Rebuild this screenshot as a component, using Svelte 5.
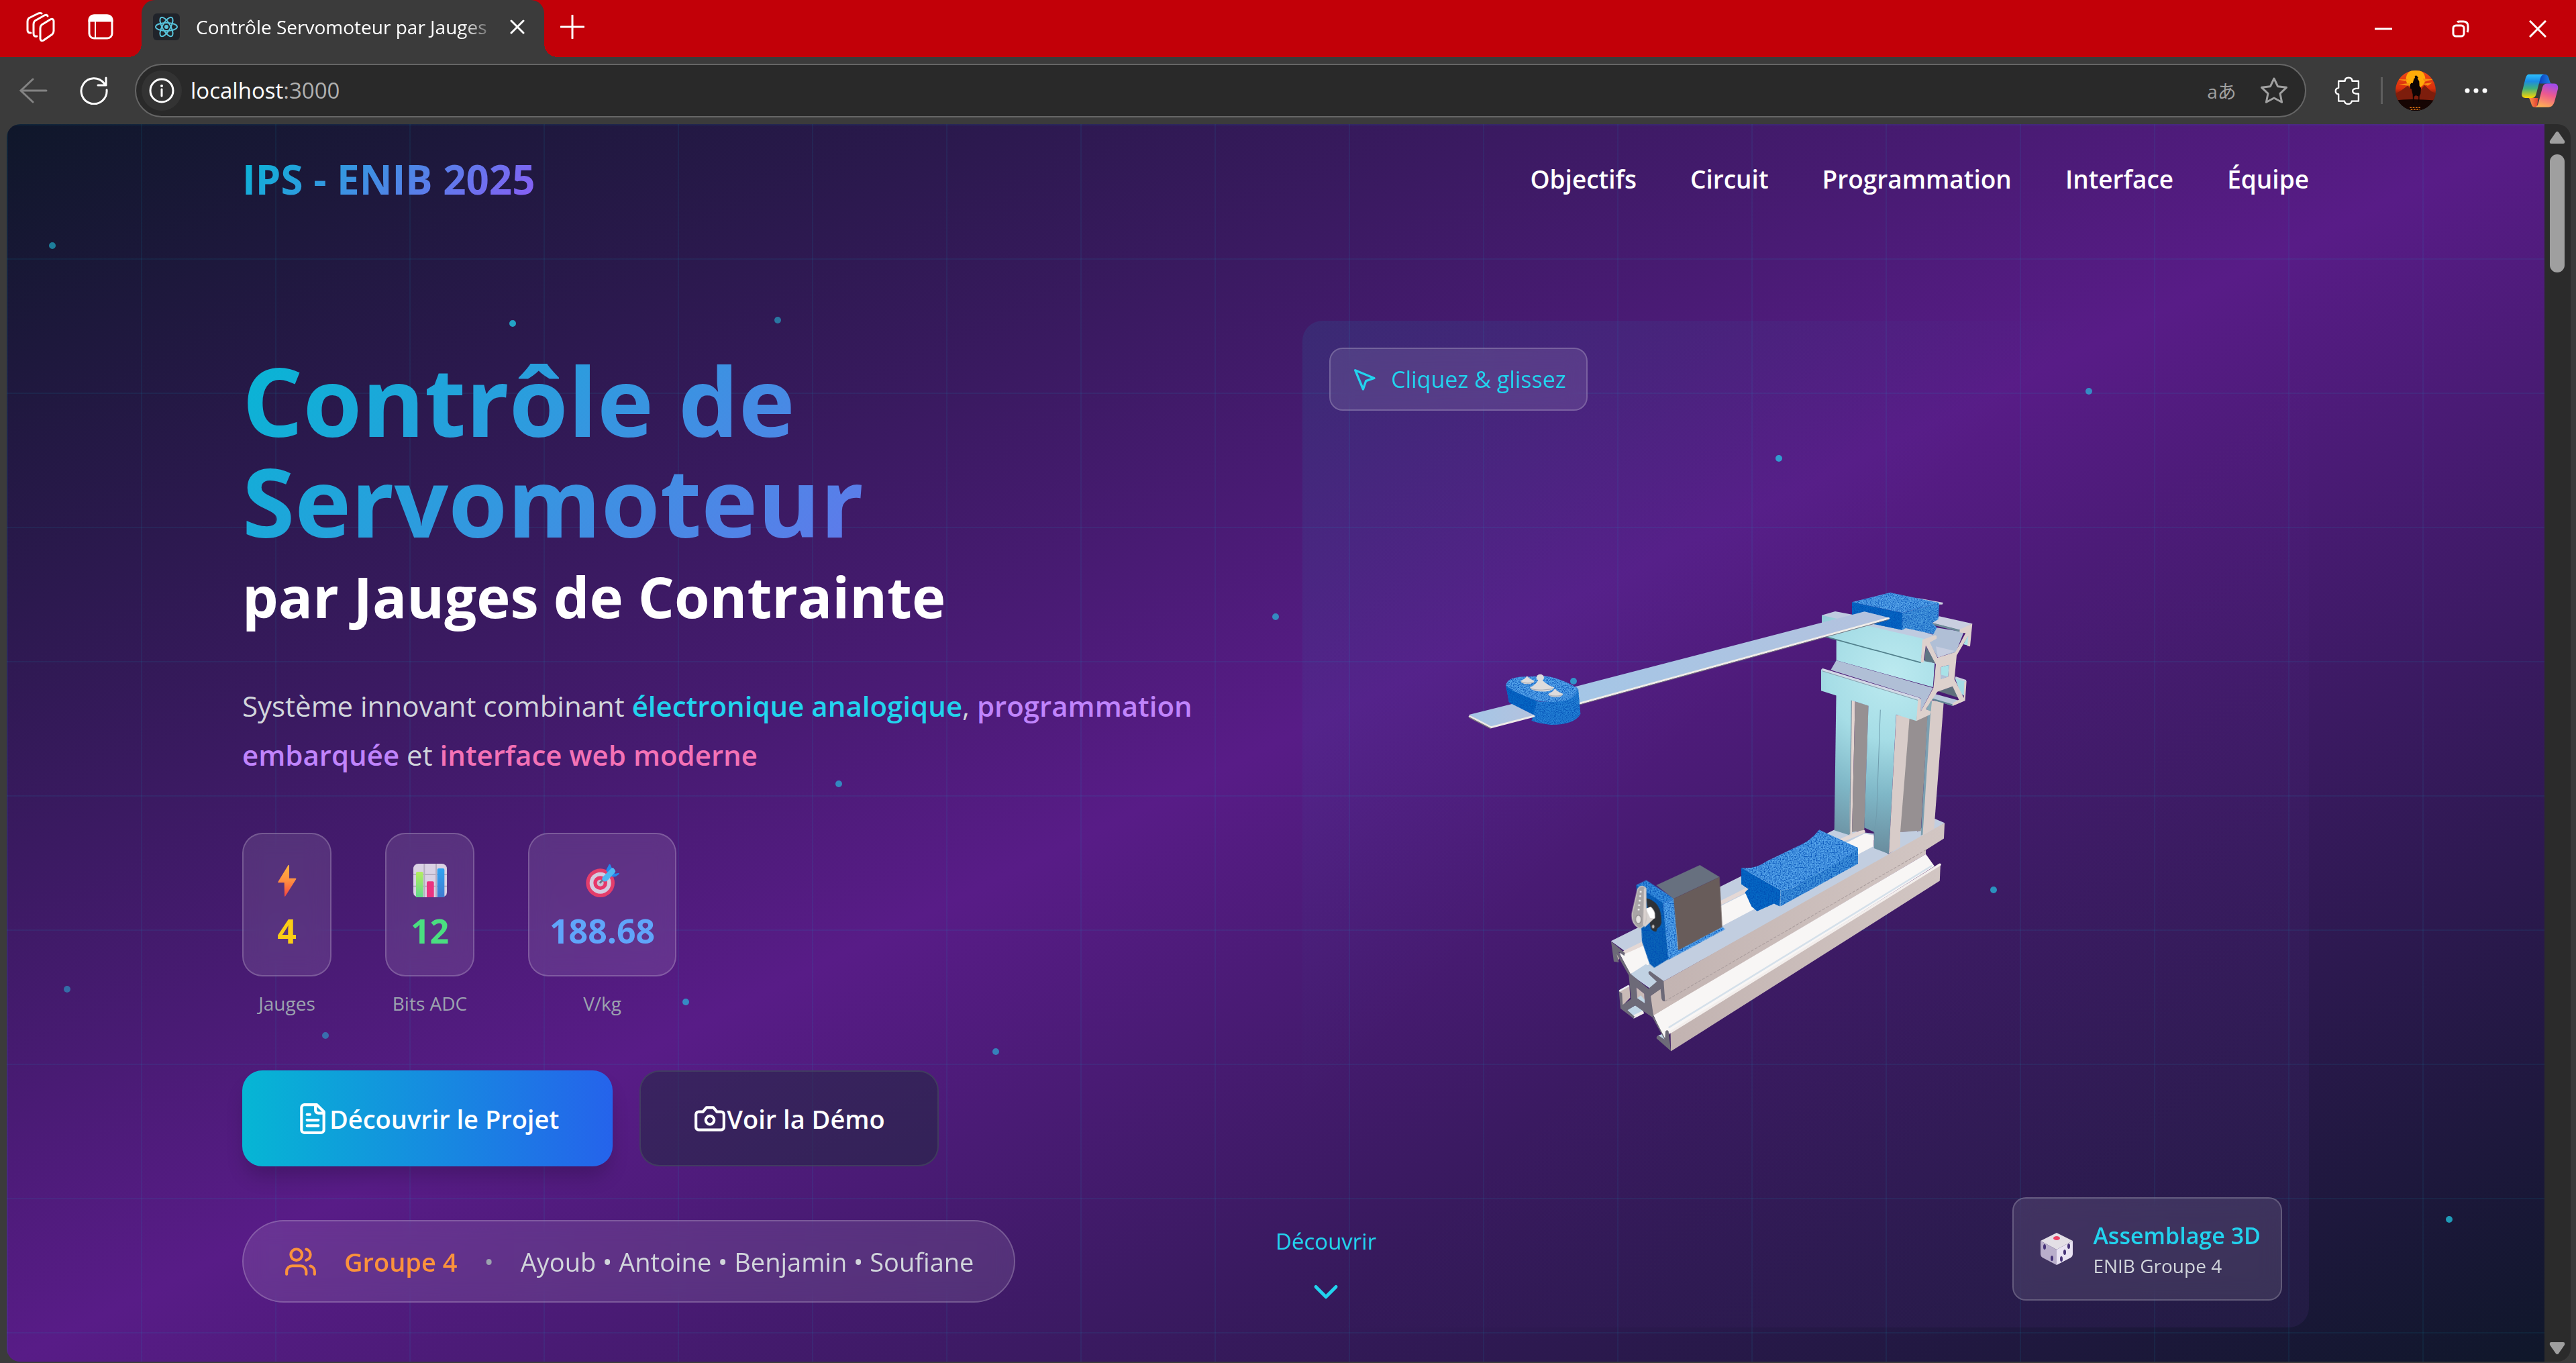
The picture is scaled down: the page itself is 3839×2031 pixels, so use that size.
<script>
  const navLinks = ['Objectifs', 'Circuit', 'Programmation', 'Interface', 'Équipe'];

  const stats = [
    { icon: 'bolt', value: '4', label: 'Jauges', tone: 'yellow' },
    { icon: 'chart', value: '12', label: 'Bits ADC', tone: 'green' },
    { icon: 'target', value: '188.68', label: 'V/kg', tone: 'blue' }
  ];

  // Floating particles: centre inside the hero and opacity.
  const particles = [
    [68, 181, 0.55], [754, 297, 0.75], [1149, 292, 0.5], [3103, 398, 0.6],
    [2641, 498, 0.7], [1891, 734, 0.6], [2335, 830, 0.65], [1240, 983, 0.6],
    [2961, 1141, 0.65], [1012, 1308, 0.6], [1474, 1382, 0.55], [475, 1358, 0.45],
    [90, 1289, 0.45], [3640, 1632, 0.7]
  ];
</script>

<div class="browser">
  <header class="tabbar">
    <button class="chrome-btn first" aria-label="Espaces de travail">
      <svg width="44" height="44" viewBox="0 0 44 44" fill="none" stroke="#fff" stroke-width="3" stroke-linejoin="round" stroke-linecap="round">
        <path d="M22 24q0-3 2-5L37 11q4-2 5 2v15q0 3-2 5L27 42q-4 2-5-2z" />
        <path d="M17 36q-5 1-5-4V18q0-3 2-5L28 5q4-2 5 1" />
        <path d="M8 31q-5 0-5-4V14q0-3 2-5L19 2q3-1 5 0" />
      </svg>
    </button>
    <button class="chrome-btn" aria-label="Onglets verticaux">
      <svg width="38" height="38" viewBox="0 0 38 38" fill="none" stroke="#fff" stroke-width="3">
        <rect x="2" y="2" width="34" height="34" rx="7" />
        <path d="M2 10q0-8 8-8h18q8 0 8 8z" fill="#fff" />
        <path d="M11 10v26" stroke-width="2" />
      </svg>
    </button>
    <div class="tab">
      <svg class="favicon" width="40" height="40" viewBox="0 0 40 40" fill="none" stroke="#58c4dc" stroke-width="2">
        <rect width="40" height="40" rx="6" fill="#20232a" stroke="none" />
        <circle cx="20" cy="20" r="3" fill="#58c4dc" stroke="none" />
        <ellipse cx="20" cy="20" rx="16" ry="6" />
        <ellipse cx="20" cy="20" rx="16" ry="6" transform="rotate(60 20 20)" />
        <ellipse cx="20" cy="20" rx="16" ry="6" transform="rotate(120 20 20)" />
      </svg>
      <span class="tab-title">Contrôle Servomoteur par Jauges</span>
      <button class="tab-close" aria-label="Fermer l'onglet">
        <svg width="22" height="22" viewBox="0 0 22 22" stroke="#fff" stroke-width="3" stroke-linecap="round"><path d="m2 2 18 18M20 2 2 20" /></svg>
      </button>
    </div>
    <button class="chrome-btn new-tab" aria-label="Nouvel onglet">
      <svg width="36" height="36" viewBox="0 0 36 36" stroke="#fff" stroke-width="3" stroke-linecap="round"><path d="M18 1v34M1 18h34" /></svg>
    </button>
    <div class="window-controls">
      <button aria-label="Réduire"><svg width="26" height="26" viewBox="0 0 26 26" stroke="#fff" stroke-width="3"><path d="M0 13h26" /></svg></button>
      <button aria-label="Restaurer">
        <svg width="26" height="26" viewBox="0 0 26 26" fill="none" stroke="#fff" stroke-width="3"><rect x="2" y="8" width="16" height="16" rx="4" /><path d="M8 3q1-1 4-1h5q7 0 7 7v5q0 2-1 4" /></svg>
      </button>
      <button aria-label="Fermer"><svg width="26" height="26" viewBox="0 0 26 26" stroke="#fff" stroke-width="3"><path d="m1 1 24 24M25 1 1 25" /></svg></button>
    </div>
  </header>

  <div class="toolbar">
    <button class="tool-btn" aria-label="Retour">
      <svg width="42" height="38" viewBox="0 0 42 38" fill="none" stroke="#838383" stroke-width="3" stroke-linecap="round"><path d="M20 2 2 19l18 17M2 19h38" /></svg>
    </button>
    <button class="tool-btn" aria-label="Actualiser">
      <svg width="42" height="42" viewBox="0 0 42 42" fill="none" stroke="#fff" stroke-width="3" stroke-linecap="round" stroke-linejoin="round"><path d="M40 20a19 19 0 1 1-4-10l3 3M39 2v11H27" /></svg>
    </button>
    <div class="omnibox">
      <button class="info" aria-label="Informations sur le site">
        <svg width="38" height="38" viewBox="0 0 38 38" fill="none" stroke="#fff" stroke-width="3"><circle cx="19" cy="19" r="17" /><path d="M19 17v10" stroke-linecap="round" /><circle cx="19" cy="12" r="2" fill="#fff" stroke="none" /></svg>
      </button>
      <a class="url" href="http://localhost:3000">localhost<span>:3000</span></a>
      <button class="translate" aria-label="Traduire">aあ</button>
      <button class="star" aria-label="Ajouter aux favoris">
        <svg width="42" height="42" viewBox="0 0 42 42" fill="none" stroke="#a0a0a0" stroke-width="3" stroke-linejoin="round"><path d="m21 3 5.500 11.700 13 1.600-9.500 9 2.600 13L21 32l-11.600 6.300 2.600-13-9.500-9 13-1.600z" /></svg>
      </button>
    </div>
    <button class="tool-btn ext" aria-label="Extensions">
      <svg width="40" height="42" viewBox="120 42 112 124" fill="none" stroke="#fff" stroke-width="7" stroke-linejoin="round"><path d="M138 62h28q0-15 16-15t16 15h28v32q-26 0-26 12t26 12v32h-30q-2 13-16 13t-16-13h-26v-30q-13-2-13-14t13-14z" /></svg>
    </button>
    <span class="separator"></span>
    <button class="avatar" aria-label="Profil">
      <svg width="60" height="60" viewBox="0 0 180 180">
        <defs>
          <linearGradient id="sky" x2="0" y2="1"><stop offset="0" stop-color="#f04a16" /><stop offset=".45" stop-color="#d82f0c" /><stop offset=".6" stop-color="#7a1a08" /><stop offset=".8" stop-color="#120402" /></linearGradient>
          <clipPath id="round"><circle cx="90" cy="90" r="90" /></clipPath>
        </defs>
        <g clip-path="url(#round)">
          <rect width="180" height="180" fill="url(#sky)" />
          <circle cx="90" cy="38" r="43" fill="#ffab08" />
          <path d="M10 40h45l-12 8zM122 36l48 4-40 10zM15 62l50-6-10 12zM120 60l45-6-20 14z" fill="#f98c12" />
          <path d="m0 104 28-16 26-20 24 24 28 2 24-28 30 28 20 8v34H0z" fill="#7d1d0c" />
          <path d="M0 134q60-10 180 0v46H0z" fill="#160503" />
          <path d="M86 26q6-7 11 0l5 6-4 3 8 14 1 20 7 10-2 25-5 10-1 30h-4l1-28-12-5-8 6-1 26h-4l-1-36-6-24-5-2-2-16 6-9 7 0 6-20 4-2z" fill="#0c0403" />
          <path d="M64 166h50M68 174h42" stroke="#ef7b12" stroke-width="4" stroke-dasharray="8 5" />
        </g>
      </svg>
    </button>
    <button class="tool-btn more" aria-label="Paramètres et plus">
      <svg width="34" height="8" viewBox="0 0 34 8" fill="#fff"><circle cx="4" cy="4" r="3.500" /><circle cx="17" cy="4" r="3.500" /><circle cx="30" cy="4" r="3.500" /></svg>
    </button>
    <button class="tool-btn copilot" aria-label="Copilot">
      <svg width="56" height="50" viewBox="950 28 170 153">
        <defs>
          <linearGradient id="cpA" x2="0" y2="1"><stop offset="0" stop-color="#2cc0ff" /><stop offset=".3" stop-color="#1b8be4" /><stop offset=".6" stop-color="#3fb07c" /><stop offset="1" stop-color="#ffd400" /></linearGradient>
          <linearGradient id="cpB" x1=".6" x2=".3" y2="1"><stop offset="0" stop-color="#a24be8" /><stop offset=".45" stop-color="#ee5a8c" /><stop offset="1" stop-color="#ffb152" /></linearGradient>
          <linearGradient id="cpC" x2="1"><stop offset="0" stop-color="#0a3fc0" /><stop offset="1" stop-color="#1f8bea" /></linearGradient>
          <linearGradient id="cpD" x2="1"><stop offset="0" stop-color="#ff9a4a" /><stop offset="1" stop-color="#e03b33" /></linearGradient>
        </defs>
        <path d="M1036 30h20q16 0 20 16l6 20q2 6 10 6h-60z" fill="url(#cpC)" />
        <path d="M984 138h44l-6 42h-10q-12 0-16-16l-6-18q-2-7-6-8z" fill="url(#cpD)" />
        <path d="M984 30h72q-14 2-18 18l-20 74q-4 16-20 16h-28q-20 0-17-22l16-64q6-22 15-22z" fill="url(#cpA)" />
        <path d="M1070 72h30q20 0 18 24l-16 60q-8 24-26 24h-64q12-2 16-16l20-76q4-16 22-16z" fill="url(#cpB)" />
      </svg>
    </button>
  </div>

  <div class="viewport">
    <div class="hero">
      {#each particles as [x, y, o]}
        <span class="particle" style="left:{x}px;top:{y}px;opacity:{o}"></span>
      {/each}

      <nav class="nav">
        <a class="logo" href="#accueil">IPS - ENIB 2025</a>
        <div class="links">
          {#each navLinks as link}<a href="#{link.toLowerCase()}">{link}</a>{/each}
        </div>
      </nav>

      <main class="content">
        <section class="intro">
          <h1><span class="title">Contrôle de Servomoteur</span><span class="subtitle">par Jauges de Contrainte</span></h1>
          <p>
            Système innovant combinant <b class="cyan">électronique analogique</b>,
            <b class="purple">programmation embarquée</b> et <b class="pink">interface web moderne</b>
          </p>

          <div class="stats">
            {#each stats as stat}
              <div class="stat">
                <div class="stat-card">
                  <div class="emoji">
                    {#if stat.icon === 'bolt'}
                      <svg width="50" height="50" viewBox="0 0 150 150">
                        <defs><linearGradient id="bolt" x2="0" y2="1"><stop offset="0" stop-color="#ffb640" /><stop offset=".5" stop-color="#ff8f40" /><stop offset="1" stop-color="#f5453f" /></linearGradient></defs>
                        <path d="M80 6q4-2 4 3v56h27q6 0 4 4l-48 76q-4 4-4-2l-1-58H36q-4 0-2-4z" fill="url(#bolt)" />
                      </svg>
                    {:else if stat.icon === 'chart'}
                      <svg width="50" height="50" viewBox="0 0 150 150">
                        <defs>
                          <linearGradient id="barG" x2="0" y2="1"><stop offset="0" stop-color="#b4ee60" /><stop offset="1" stop-color="#62d98e" /></linearGradient>
                          <linearGradient id="barB" x2="0" y2="1"><stop offset="0" stop-color="#2fa4f3" /><stop offset="1" stop-color="#417bd0" /></linearGradient>
                        </defs>
                        <rect width="150" height="150" rx="22" fill="#dad2e4" />
                        <path d="M49 0v150M102 0v150M0 48h150M0 101h150" stroke="#b7afc2" stroke-width="6" />
                        <path d="M12 150V42q0-6 6-6h20q6 0 6 6v108z" fill="url(#barG)" />
                        <path d="M60 150V85q0-6 6-6h20q6 0 6 6v65z" fill="#ea3480" />
                        <path d="M107 150V27q0-6 6-6h20q6 0 6 6v123z" fill="url(#barB)" />
                      </svg>
                    {:else}
                      <svg width="50" height="50" viewBox="0 0 150 150">
                        <circle cx="65" cy="86" r="64" fill="#e33d6b" />
                        <circle cx="65" cy="86" r="48" fill="#d3cbe0" />
                        <circle cx="65" cy="86" r="31" fill="#e8376a" />
                        <circle cx="65" cy="86" r="15" fill="#c8c2d6" />
                        <path d="m65 84 14-14" stroke="#6f7186" stroke-width="9" stroke-linecap="round" />
                        <path d="m90 30 14-27q6-2 8 6l6 14 12 22 18-4q4 2-2 8-14 14-30 8z" fill="#2487ec" />
                        <path d="m75 60 42-42q9 0 12 8 6 8 2 12L98 74q-12 10-22 2-6-8-1-16z" fill="#4fb8f2" />
                      </svg>
                    {/if}
                  </div>
                  <strong class={stat.tone}>{stat.value}</strong>
                </div>
                <span class="stat-label">{stat.label}</span>
              </div>
            {/each}
          </div>

          <div class="actions">
            <button class="primary">
              <svg width="50" height="50" viewBox="0 0 24 24" fill="none" stroke="currentColor" stroke-width="2" stroke-linecap="round" stroke-linejoin="round">
                <path d="M15 2H6a2 2 0 0 0-2 2v16a2 2 0 0 0 2 2h12a2 2 0 0 0 2-2V7Z" /><path d="M14 2v4a2 2 0 0 0 2 2h4M10 9H8M16 13H8M16 17H8" />
              </svg>Découvrir le Projet
            </button>
            <button class="secondary">
              <svg width="50" height="50" viewBox="0 0 24 24" fill="none" stroke="currentColor" stroke-width="2" stroke-linecap="round" stroke-linejoin="round">
                <path d="M14.500 4h-5L7 7H4a2 2 0 0 0-2 2v9a2 2 0 0 0 2 2h16a2 2 0 0 0 2-2V9a2 2 0 0 0-2-2h-3z" /><circle cx="12" cy="13" r="3" />
              </svg>Voir la Démo
            </button>
          </div>

          <div class="team">
            <svg width="50" height="50" viewBox="0 0 24 24" fill="none" stroke="#fb923c" stroke-width="2" stroke-linecap="round" stroke-linejoin="round">
              <path d="M16 21v-2a4 4 0 0 0-4-4H6a4 4 0 0 0-4 4v2" /><circle cx="9" cy="7" r="4" /><path d="M22 21v-2a4 4 0 0 0-3-3.870M16 3.130a4 4 0 0 1 0 7.750" />
            </svg>
            <b>Groupe 4</b>
            <span class="dot">•</span>
            <span class="members">Ayoub • Antoine • Benjamin • Soufiane</span>
          </div>
        </section>

        <section class="model" aria-label="Modèle 3D">
          <svg class="scene" viewBox="0 0 1500 1500">
            <defs>
              <radialGradient id="glow" gradientUnits="userSpaceOnUse" cx="540" cy="440" r="820"><stop offset="0" stop-color="#bceaf0" /><stop offset=".35" stop-color="#a6dde6" /><stop offset=".65" stop-color="#7fb7c7" /><stop offset="1" stop-color="#67889a" /></radialGradient>
              <linearGradient id="arm" x1="1" x2="0"><stop offset="0" stop-color="#b4c2de" /><stop offset="1" stop-color="#a4c6e6" /></linearGradient>
              <linearGradient id="side" x1="0" x2="1"><stop offset="0" stop-color="#c2b3b1" /><stop offset="1" stop-color="#d2c6c3" /></linearGradient>
              <filter id="grain" x="0" y="0" width="1" height="1" color-interpolation-filters="sRGB">
                <feTurbulence type="fractalNoise" baseFrequency=".5" numOctaves="2" seed="4" />
                <feColorMatrix values="0 0 0 0 0  0 0 0 0 .3  0 0 0 0 .7  2.400 0 0 0 -.920" result="n" />
                <feComposite in="n" in2="SourceAlpha" operator="in" result="m" />
                <feMerge><feMergeNode in="SourceGraphic" /><feMergeNode in="m" /></feMerge>
              </filter>
            </defs>

            <!-- base rail -->
            <g transform="translate(209 362) scale(.5612 .4847)">
              <path d="M447 1160 1045 815 1145 830V850L485 1192z" fill="#c2cee0" />
              <path d="M485 1200 1120 830 1145 835V875L500 1260z" fill="#f8f6f5" />
              <path d="M485 1194 535 1166M740 1042 812 1000M1060 850 1116 823" stroke="#e4d8d5" stroke-width="12" stroke-linecap="round" />
              <path d="M500 1258 740 1115 1145 868 1185 893 1305 783 1333 797 1283 835 585 1285z" fill="#c2cee0" />
              <path d="M585 1285 1185 893 1333 797 1331 845 1283 880V893L560 1390 548 1330 590 1345z" fill="url(#side)" />
              <path d="M590 1345 1283 880" stroke="#a99c9c" stroke-width="2" stroke-dasharray="8 4" />
              <path d="M560 1388 1283 893 1306 930 605 1440 590 1468z" fill="#f8f6f5" />
              <path d="M600 1426 1300 928" stroke="#d5e0ea" stroke-width="5" />
              <path d="M605 1440 1322 922 1320 975 606 1499z" fill="url(#side)" />
              <path d="M605 1440 1320 925" stroke="#f3eeec" stroke-width="7" stroke-linecap="round" />
            </g>

            <!-- rail end profile -->
            <g transform="translate(449 802) scale(.33333)">
              <path d="M92 425 170 392 205 470 118 515 70 420z" fill="#f8f6f5" />
              <path d="m118 515 70-45 40 20 10 60-30 30z" fill="#c1d2e3" />
              <path d="M68 590 115 565 118 620 85 655z" fill="#c9bab7" /><path d="m70 590 43-24" stroke="#eceef2" stroke-width="8" />
              <path d="m105 675 38-22 36 28-45 32z" fill="#c1d6e6" /><path d="m133 706 45-22" stroke="#f1eeec" stroke-width="14" />
              <path d="m52 412 18 30-8 20z" fill="#c9bab7" />
              <path d="m210 612 50-38 10 64 70-10-118 72z" fill="#c9bab7" />
              <path d="m242 790 20-8 14 32z" fill="#c1d6e6" />
              <path d="M33 368 95 420 92 433 66 415 120 513 200 580 237 548 202 515Q196 500 208 502L268 545 274 635Q262 640 258 622L254 582 210 612 222 700 274 802 276 770Q284 762 290 770L300 858 236 802Q236 788 246 790L272 806 218 708 140 655 106 676 138 704 134 713 75 668 68 592 82 600 85 652 122 626 112 520 58 425 68 462 45 458zM146 574 150 618 184 644 181 602z" fill="#6d6a78" fill-rule="evenodd" />
              <path d="M146 574 181 602 184 644 150 622z" fill="#c9bab7" /><path d="m150 622 16-12 17 20v14z" fill="#c1d6e6" />
            </g>

            <!-- column -->
            <g transform="translate(699 382) scale(.33333)">
              <path d="M290 500 360 545 352 1154 281 1132z" fill="url(#glow)" />
              <path d="M357 548 374 556 360 1154 348 1154z" fill="#e2d4d0" /><path d="M358 550 350 1150" stroke="#7e97a4" stroke-width="4" />
              <path d="M374 556 434 574 415 1130 360 1140z" fill="#969092" />
              <path d="M434 565 558 605 525 1237 458 1212 460 1140 415 1120z" fill="url(#glow)" />
              <path d="m487 592-17 470-12 90" fill="none" stroke="#6f9cad" stroke-width="3" />
              <path d="M558 616 620 625 576 1205 525 1237z" fill="#d8ccc9" />
              <path d="M617 630 700 600 668 1135 576 1140z" fill="#969092" />
              <path d="M576 1140 650 1134 668 1154 576 1205z" fill="#c2cee0" />
              <path d="M700 570 718 555 682 1150 668 1154z" fill="#7c9fb0" />
              <path d="M715 550 770 560 727 1125 676 1154z" fill="#d8ccc9" />
            </g>

            <!-- blue support -->
            <g filter="url(#grain)">
              <g transform="translate(209 362) scale(.5612 .4847)">
                <path d="M793 935 897 1003 895 1053 880 1045 835 1068 820 1053 803 1010 812 1000 793 985z" fill="#0668c4" />
                <path d="M793 935Q830 940 860 915L940 870Q975 855 1000 818L1103 873V877Q1060 920 1000 950 960 975 940 990 920 1005 897 1003z" fill="#57a6ec" />
                <path d="M897 1003Q920 1005 940 990 960 972 1000 950 1070 910 1103 875V922L897 1053z" fill="#4294dc" />
              </g>
              <!-- servo bracket -->
              <g transform="translate(449 802) scale(.33333)">
                <path d="M145 117 265 195 290 447 226 486 205 468 182 400 172 372 168 300z" fill="#0a64b8" />
                <path d="M145 117 190 95 315 177 265 197z" fill="#3a92e0" />
                <path d="M265 197 315 177 332 405 530 304 543 313 290 450z" fill="#58a8ee" />
              </g>
            </g>
            <g transform="translate(449 802) scale(.33333)">
              <path d="M235 117 430 27 518 80 312 178z" fill="#67707f" />
              <path d="M312 178 518 80 530 304 333 408z" fill="#685c5a" />
              <path d="M190 175Q260 190 258 285 256 300 240 310L235 325Q212 325 208 300z" fill="#2f3236" />
              <ellipse cx="221" cy="302" rx="6" ry="9" fill="#d0cac8" stroke="#555" stroke-width="3" />
              <path d="m180 230 30-16q20 10 20 48l-48 45z" fill="#d7d2d0" /><path d="m188 222 22-8 18 26v26l-20-2z" fill="#fff" />
              <path d="M152 135Q166 112 188 130L190 265Q184 308 158 308 124 290 127 245z" fill="#a9a5a6" stroke="#c6c0be" stroke-width="5" />
              <path d="m188 130 2 130-8 42-6-10 4-160z" fill="#d9d1ce" />
              <ellipse cx="155" cy="270" rx="13" ry="19" fill="#e5e2e1" stroke="#8c8889" stroke-width="4" />
              <path d="M165 146h0M163 166h0M161 186h0M158 206h0M156 226h0" stroke="#eee" stroke-width="9" stroke-linecap="round" />
            </g>

            <!-- top beam -->
            <g transform="translate(699 382) scale(.33333)">
              <path d="M648 92 768 114 764 122 740 122z" fill="#c9cede" />
              <path d="M225 170 285 153 560 205 735 262 680 282 240 190z" fill="#bfcbe0" />
              <path d="M290 265 730 385 722 492 290 372z" fill="url(#glow)" />
              <path d="M225 170 680 275 668 380 240 265 225 205z" fill="url(#glow)" />
              <path d="M240 266 668 382" stroke="#52808c" stroke-width="5" />
              <path d="M290 372 722 495 668 600 665 540 265 415z" fill="#b0bfd6" />
              <path d="M222 412 660 545 648 643 222 508z" fill="url(#glow)" />
              <path d="M226 412 662 545" stroke="#d2d8e6" stroke-width="10" /><path d="M226 419 660 552" stroke="#8b9dac" stroke-width="3" />
              <path d="M690 310 735 385 684 376z" fill="#5f7683" />
              <path d="M735 225 860 245 825 335 742 358 705 292z" fill="#b0bfd6" />
              <path d="M735 310 820 330 745 360z" fill="#c6cde0" />
              <path d="M750 175 898 208 845 238 718 205z" fill="#c9cfe0" /><path d="M718 208 842 240" stroke="#6e8b98" stroke-width="9" />
              <path d="M882 255 880 306 858 300z" fill="#a6e0e6" />
              <path d="M820 450 870 466 862 530 845 520z" fill="#a6dce4" /><path d="M822 448 870 464" stroke="#c7d0de" stroke-width="9" />
              <path d="M745 510 810 488 840 540z" fill="#5f6f7c" />
              <path d="M722 520 840 552 810 575 718 545z" fill="#b8c8da" /><path d="M718 545 810 572" stroke="#5f8392" stroke-width="7" />
              <path d="m690 590 28-40-6 50z" fill="#86acb8" />
              <path d="M675 280 728 260Q742 258 738 275L708 292 742 360 822 335 868 250 845 248Q836 240 846 232L898 208 888 310 876 308 880 262 828 350 818 456 860 540 862 470 872 464 866 552 812 575Q804 568 815 560L838 548 810 488 742 512 690 590 712 600 708 615 648 643 655 545 668 545 668 600 724 495 735 390 690 305 680 382 668 380zM758 402 756 455 790 445 794 392z" fill="#ddd1cd" fill-rule="evenodd" />
              <path d="M758 402 794 392 790 445 756 455z" fill="#a9e2e8" /><path d="m756 436 34 9-34 12z" fill="#b0bfd6" />
            </g>
            <g filter="url(#grain)" transform="translate(699 382) scale(.33333)">
              <path d="M360 112 530 69 750 115 585 160z" fill="#5aa8ec" />
              <path d="M360 112 585 160 584 236 360 190z" fill="#0668c4" />
              <path d="M585 160 750 115 746 188 718 205 740 225 724 255 600 228 584 236z" fill="#4a9be0" />
            </g>

            <!-- arm and load -->
            <g transform="translate(209 362) scale(.5612 .4847)">
              <path d="M345 380 1120 147 1186 166 362 430z" fill="url(#arm)" />
              <path d="M362 430 1184 168" stroke="#f1ede9" stroke-width="6" stroke-linecap="round" /><path d="M362 434 1184 172" stroke="#777680" stroke-width="2" />
            </g>
            <g filter="url(#grain)" transform="translate(209 362) scale(.5612 .4847)">
              <path d="M168 375Q210 425 275 425 335 420 360 385L366 462Q350 495 288 495 255 492 236 482L245 467 183 431 176 425z" fill="#2582d6" />
              <path d="M168 372 250 422 236 482 245 467 183 431 176 425z" fill="#0668c4" />
              <path d="M168 375Q170 345 230 347L270 345Q310 350 358 382 358 425 285 425 250 425 230 412 180 390 168 375z" fill="#57a6ec" />
            </g>
            <g transform="translate(209 362) scale(.5612 .4847)">
              <path d="M70 464 184 431 245 467 128 503z" fill="url(#arm)" />
              <path d="M70 468 128 503 244 468" fill="none" stroke="#eeeae7" stroke-width="6" stroke-linejoin="round" /><path d="m70 472 58 35" stroke="#7d7a80" stroke-width="3" />
              <g fill="#dedcdc">
                <path d="M232 380Q255 368 258 342 264 368 296 380 292 393 264 393 236 392 232 380z" /><circle cx="259" cy="350" r="10" />
                <path d="M207 360Q220 354 224 345 230 354 244 360 240 370 225 370 210 370 207 360z" />
                <path d="M280 400Q294 394 298 384 304 394 320 400 316 410 300 410 284 410 280 400z" />
              </g>
              <path d="M233 383Q250 393 294 384M208 363Q225 371 242 364M281 403Q300 411 318 403" fill="none" stroke="#aeb2ba" stroke-width="3" />
            </g>
          </svg>

          <div class="hint">
            <svg width="40" height="40" viewBox="0 0 24 24" fill="none" stroke="currentColor" stroke-width="2" stroke-linecap="round" stroke-linejoin="round"><path d="m4 4 7.070 17 2.510-7.390L21 11.070z" /></svg>
            Cliquez &amp; glissez
          </div>

          <div class="caption">
            <svg width="68" height="50" viewBox="0 0 68 50">
              <path d="m34 1 24 12-24 13L10 13z" fill="#e3dfe6" /><path d="m10 13 24 13v23L13 38q-3-2-3-5z" fill="#b9aecb" /><path d="m58 13-24 13v23l21-11q3-2 3-5z" fill="#e9e3f3" />
              <ellipse cx="34" cy="9" rx="5" ry="3" fill="#ee4266" />
              <g fill="#463378"><ellipse cx="16" cy="22" rx="2" ry="4" /><ellipse cx="27" cy="39" rx="2" ry="4" /><ellipse cx="52" cy="21" rx="2" ry="4" /><ellipse cx="46" cy="30" rx="2" ry="4" /><ellipse cx="41" cy="40" rx="2" ry="4" /></g>
            </svg>
            <div><strong>Assemblage 3D</strong><span>ENIB Groupe 4</span></div>
          </div>
        </section>
      </main>

      <a class="discover" href="#objectifs">
        Découvrir
        <svg width="60" height="60" viewBox="0 0 24 24" fill="none" stroke="currentColor" stroke-width="2" stroke-linecap="round" stroke-linejoin="round"><path d="m6 9 6 6 6-6" /></svg>
      </a>
    </div>

    <div class="scrollbar" aria-hidden="true">
      <svg width="24" height="18" viewBox="0 0 24 18" fill="#9f9f9f"><path d="M10 1q2-2 4 0l9 13q1 4-2 4H3q-3 0-2-4z" /></svg>
      <span class="thumb"></span>
      <svg width="24" height="18" viewBox="0 0 24 18" fill="#9f9f9f"><path d="M10 17q2 2 4 0l9-13q1-4-2-4H3Q0 0 1 4z" /></svg>
    </div>
  </div>
</div>

<style>
  :global(body) { background: #3b3b3b; }
  .browser { display: flex; flex-direction: column; min-height: 100vh; box-sizing: border-box; background: #3b3b3b; font-family: "Open Sans", "Noto Sans", sans-serif; color: #fff; padding-bottom: 2px; }
  button { font: inherit; color: inherit; background: none; border: 0; padding: 0; cursor: pointer; display: flex; align-items: center; justify-content: center; }
  a { color: inherit; text-decoration: none; }
  svg { display: block; flex: none; }

  .tabbar { display: flex; height: 85px; background: #c20008; }
  .chrome-btn { width: 90px; height: 80px; }
  .chrome-btn.first { margin-left: 15px; }
  .tab { position: relative; display: flex; align-items: center; width: 600px; margin-left: 16px; box-sizing: border-box; padding: 0 20px 5px 17px; background: #3b3b3b; border-radius: 20px 20px 0 0; }
  .tab::before, .tab::after { content: ""; position: absolute; bottom: 0; width: 20px; height: 20px; }
  .tab::before { left: -20px; background: radial-gradient(circle at 0 0, transparent 20px, #3b3b3b 20px); }
  .tab::after { right: -20px; background: radial-gradient(circle at 100% 0, transparent 20px, #3b3b3b 20px); }
  .tab-title { flex: 1; margin-left: 24px; font-size: 28px; line-height: 40px; white-space: nowrap; mask-image: linear-gradient(90deg, #000 396px, transparent 450px); }
  .tab-close { width: 40px; height: 40px; margin-left: 12px; }
  .new-tab { width: 84px; }
  .window-controls { display: flex; margin-left: auto; }
  .window-controls button { width: 115px; height: 85px; }

  .toolbar { display: flex; align-items: center; height: 100px; padding: 0 14px 0 5px; }
  .tool-btn { width: 90px; height: 80px; }
  .omnibox { flex: 1; display: flex; align-items: center; height: 80px; box-sizing: border-box; margin-left: 16px; padding: 0 16px 0 8px; border: 2px solid #666; border-radius: 40px; background: #292929; }
  .info { width: 60px; height: 60px; border-radius: 50%; background: #333; }
  .url { flex: 1; margin-left: 13px; font-size: 33px; line-height: 44px; }
  .url span { color: #b0b0b0; }
  .translate { width: 80px; font-family: "Open Sans", "Noto Sans CJK JP", sans-serif; font-size: 28px; color: #a0a0a0; }
  .star { width: 60px; margin-left: 8px; }
  .ext { width: 80px; margin-left: 21px; }
  .separator { width: 3px; height: 40px; margin-left: 10px; background: #5e5e5e; }
  .avatar { margin-left: 19px; }
  .more { width: 80px; margin-left: 20px; }
  .copilot { width: 80px; margin-left: 15px; }

  .viewport { flex: 1; display: flex; margin: 0 8px 0 10px; border-radius: 20px; overflow: hidden; }
  .hero {
    position: relative; flex: 1; padding: 0 60px;
    background:
      linear-gradient(rgba(6, 182, 212, 0.08) 2px, transparent 2px) 0 0 / 200px 200px,
      linear-gradient(90deg, rgba(6, 182, 212, 0.08) 2px, transparent 2px) 0 0 / 200px 200px,
      linear-gradient(to bottom right, #0f172a, #581c87, #0f172a);
  }
  .scrollbar { display: flex; flex-direction: column; align-items: center; width: 39px; box-sizing: border-box; padding: 11px 2px 11px 0; background: #2b2b2b; }
  .thumb { width: 22px; height: 176px; margin: 16px 0 auto; border-radius: 11px; background: #9f9f9f; }
  .particle { position: absolute; width: 10px; height: 10px; margin: -5px 0 0 -5px; border-radius: 50%; background: #22d3ee; z-index: 1; }

  .nav { display: flex; align-items: center; justify-content: space-between; max-width: 3080px; height: 164px; margin: 0 auto; }
  .logo { font-size: 60px; line-height: 80px; font-weight: 700; background: linear-gradient(135deg, #06b6d4, #8b5cf6); background-clip: text; color: transparent; }
  .links { display: flex; gap: 80px; font-size: 37px; line-height: 56px; font-weight: 600; }

  .content { display: grid; grid-template-columns: 1fr 1fr; gap: 80px; align-items: center; max-width: 3080px; margin: 0 auto; padding: 129px 0 51px; }
  .intro { padding-top: 6px; }
  h1 { margin: 0; font-weight: 700; }
  .title, .subtitle { display: block; }
  .title { font-size: 142px; line-height: 150px; background: linear-gradient(135deg, #06b6d4, #8b5cf6); background-clip: text; color: transparent; }
  .subtitle { font-size: 85px; line-height: 134px; }
  p { margin: 60px 0 0; font-size: 42px; line-height: 73px; color: #d1d5db; }
  p b { font-weight: 600; }
  .cyan { color: #22d3ee; }
  .purple { color: #c084fc; }
  .pink { color: #f472b6; }

  .stats { display: flex; gap: 80px; margin-top: 80px; }
  .stat { display: flex; flex-direction: column; align-items: center; }
  .stat-card { display: flex; flex-direction: column; align-items: center; min-width: 133px; box-sizing: border-box; padding: 30px; border: 2px solid rgba(255, 255, 255, 0.2); border-radius: 30px; background: rgba(255, 255, 255, 0.1); backdrop-filter: blur(16px); }
  .emoji { display: flex; align-items: center; height: 78px; }
  .stat-card strong { font-size: 50px; line-height: 72px; }
  .yellow { color: #facc15; }
  .green { color: #4ade80; }
  .blue { color: #60a5fa; }
  .stat-label { margin-top: 20px; font-size: 28px; line-height: 40px; color: #9ca3af; }

  .actions { display: flex; gap: 40px; margin-top: 80px; }
  .actions button { height: 143px; padding: 0 80px; border-radius: 30px; font-size: 38px; font-weight: 600; }
  .primary { background: linear-gradient(90deg, #06b6d4, #2563eb); box-shadow: 0 20px 30px -6px rgba(0, 0, 0, 0.2); }
  .actions .secondary { border: 2px solid rgba(75, 85, 99, 0.5); padding: 0 78px; background: rgba(30, 41, 59, 0.5); }

  .team { display: flex; align-items: center; gap: 40px; width: max-content; height: 123px; margin-top: 80px; box-sizing: border-box; padding: 0 60px; border: 2px solid rgba(255, 255, 255, 0.2); border-radius: 62px; background: rgba(255, 255, 255, 0.1); backdrop-filter: blur(16px); font-size: 38px; line-height: 56px; }
  .team b { font-weight: 600; color: #fb923c; }
  .dot { color: #9ca3af; }
  .members { color: #d1d5db; }

  .model { position: relative; height: 1500px; border-radius: 30px; background: linear-gradient(to bottom right, rgba(6, 182, 212, 0.1), rgba(6, 182, 212, 0) 40%, rgba(168, 85, 247, 0) 50%, rgba(168, 85, 247, 0.07)); }
  .scene { width: 100%; height: 100%; }
  .hint, .caption { position: absolute; display: flex; align-items: center; gap: 20px; box-sizing: border-box; padding: 0 30px; border: 2px solid rgba(255, 255, 255, 0.2); border-radius: 20px; background: rgba(255, 255, 255, 0.1); backdrop-filter: blur(16px); }
  .hint { top: 40px; left: 40px; height: 94px; font-size: 34px; color: #22d3ee; }
  .caption { right: 40px; bottom: 40px; height: 154px; }
  .caption strong, .caption span { display: block; }
  .caption strong { font-size: 34px; line-height: 50px; font-weight: 600; color: #22d3ee; }
  .caption span { font-size: 28px; line-height: 40px; color: #d1d5db; }

  .discover { position: absolute; left: 50%; bottom: 74px; display: flex; flex-direction: column; align-items: center; gap: 20px; font-size: 33px; line-height: 50px; color: #22d3ee; }
</style>
